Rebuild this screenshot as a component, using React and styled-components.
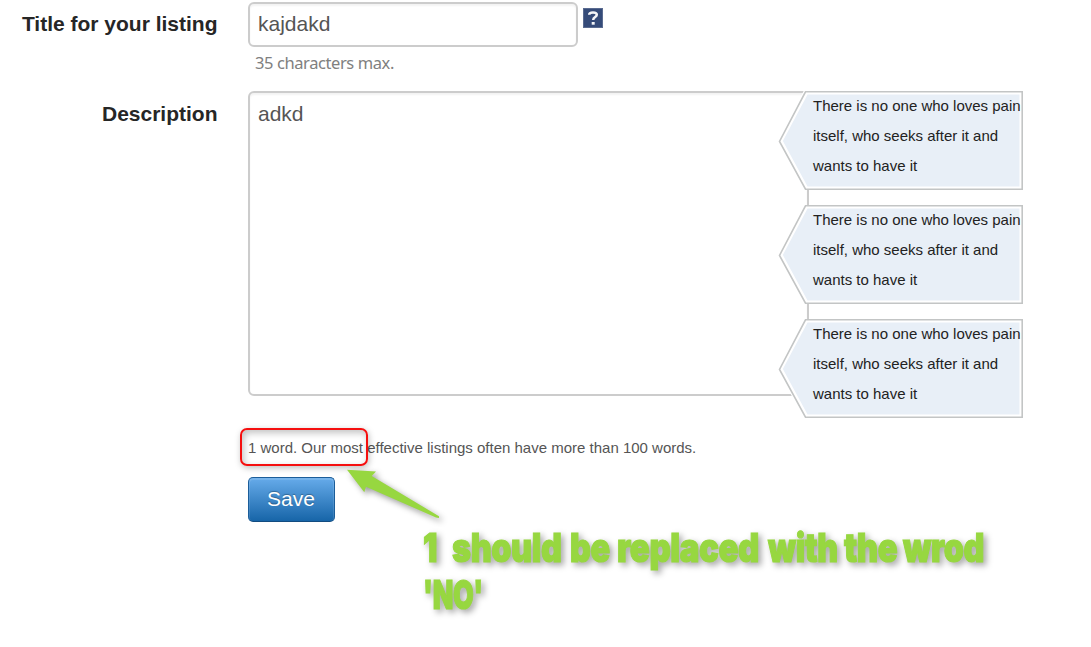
import React from 'react';
import styled, { createGlobalStyle } from 'styled-components';

const GlobalStyle = createGlobalStyle`
  * { box-sizing: border-box; }
  body {
    margin: 0;
    background: #fff;
    font-family: "Liberation Sans", Arial, sans-serif;
    overflow: hidden;
  }
`;

const Page = styled.main`
  position: relative;
  width: 1091px;
  height: 647px;
  padding-top: 2px;
  overflow: hidden;
`;

const FieldRow = styled.div`
  display: grid;
  grid-template-columns: 217.5px 1fr;
  column-gap: 30.5px;
  height: ${(p) => p.$height}px;
`;

const Label = styled.label`
  padding-top: ${(p) => p.$offset}px;
  text-align: right;
  font-size: 21px;
  font-weight: bold;
  line-height: 26px;
  color: #262626;
  white-space: nowrap;
`;

const Control = styled.div`
  position: relative;
`;

const InputLine = styled.div`
  display: flex;
  align-items: flex-start;
  gap: 5px;
`;

const fieldStyle = `
  display: block;
  margin: 0;
  border: 2px solid #ccc;
  border-radius: 6px;
  background: #fff;
  box-shadow: inset 0 2px 2px rgba(0, 0, 0, 0.05);
  font: 21px/26px "Liberation Sans", Arial, sans-serif;
  color: #555;
  outline: none;
`;

const TextInput = styled.input`
  ${fieldStyle}
  width: 330px;
  height: 45px;
  padding: 0 8px 2px;
`;

const TextArea = styled.textarea`
  ${fieldStyle}
  width: 561px;
  height: 305px;
  padding: 8px;
  resize: none;
`;

const HelpIcon = styled.svg`
  display: block;
  width: 20px;
  height: 20px;
  margin-top: 6px;
`;

const Hint = styled.p`
  margin: 4px 0 0 7px;
  font: 16.5px/24px "Noto Sans", Tahoma, sans-serif;
  letter-spacing: -0.41px;
  color: #808080;
`;

const CalloutList = styled.div`
  position: absolute;
  top: 0;
  left: 530px;
  display: flex;
  flex-direction: column;
  gap: 15px;
`;

const CalloutBox = styled.div`
  position: relative;
  width: 245px;
  height: 99px;
  padding-left: 35px;
  font-size: 15px;
  line-height: 30px;
  color: #222;
  white-space: nowrap;
`;

const CalloutShape = styled.svg`
  position: absolute;
  inset: 0;
`;

const CalloutText = styled.div`
  position: relative;
`;

const Footer = styled.div`
  padding-left: 248px;
`;

const WordCount = styled.p`
  margin: 0;
  padding-top: 42px;
  font-size: 15px;
  line-height: 20px;
  color: #555;
`;

const SaveButton = styled.button`
  display: block;
  margin-top: 19px;
  width: 87px;
  height: 45px;
  padding: 0 1px 1px 0;
  border: 1px solid #1b5d99;
  border-bottom-color: #124c80;
  border-radius: 5px;
  background: linear-gradient(#66abea, #1765a8);
  box-shadow: inset 0 1px 0 1px rgba(255, 255, 255, 0.12);
  font: 21px/26px "Liberation Sans", Arial, sans-serif;
  color: #fff;
  text-shadow: 0 -1px 1px rgba(0, 0, 0, 0.3);
`;

const Highlight = styled.div`
  position: absolute;
  left: 240px;
  top: 428px;
  width: 128px;
  height: 38px;
  border: 2px solid #f50f0f;
  border-radius: 7px;
  box-shadow: 1px 2px 6px rgba(0, 0, 0, 0.25), inset 2px 3px 7px rgba(0, 0, 0, 0.24);
`;

const Arrow = styled.svg`
  position: absolute;
  left: 335px;
  top: 458px;
  overflow: visible;
  filter: drop-shadow(3px 3px 3px rgba(0, 0, 0, 0.4));
`;

const Annotation = styled.div`
  position: absolute;
  left: 423px;
  top: 524px;
  font: 900 40px/47px Inter, sans-serif;
  letter-spacing: -0.5px;
  color: #97d740;
  -webkit-text-stroke: 1.2px #97d740;
  filter: drop-shadow(3px 3px 3px rgba(0, 0, 0, 0.35));
`;

const AnnotationLine = styled.div`
  display: flex;
  height: 47px;
`;

const Word = styled.span`
  display: block;
  flex: none;
  width: ${(p) => p.$width}px;
  white-space: nowrap;
  transform: scaleX(${(p) => p.$scale});
  transform-origin: left;
`;

const words = [
  ['1', 29, 0.8],
  ['should', 118, 0.81],
  ['be', 47, 0.81],
  ['replaced', 151, 0.825],
  ['with', 76, 0.8],
  ['the', 59, 0.82],
  ['wrod', 80, 0.81],
];

function Callout() {
  return (
    <CalloutBox>
      <CalloutShape width="245" height="99" viewBox="0 0 245 99">
        <path d="M28 1H244V98H28L2 50Z" fill="#e8eff7" stroke="#fff" strokeWidth="5" />
        <path d="M27.5 0.8H244.200V98.200H27.5L1.5 50.500Z" fill="none" stroke="#c3c5c5" strokeWidth="1.6" />
      </CalloutShape>
      <CalloutText>
        There is no one who loves pain<br />
        itself, who seeks after it and<br />
        wants to have it
      </CalloutText>
    </CalloutBox>
  );
}

export default function App() {
  return (
    <>
      <GlobalStyle />
      <Page>
        <FieldRow $height={89}>
          <Label htmlFor="title" $offset={9}>Title for your listing</Label>
          <Control>
            <InputLine>
              <TextInput id="title" defaultValue="kajdakd" />
              <HelpIcon viewBox="0 0 20 20">
                <rect x="0.5" y="0.5" width="19" height="19" fill="#354b79" stroke="#5a6b90" />
                <path d="M6.2 6.8C6.2 4.8 8 4.4 10 4.4C12.6 4.4 13.8 5.2 13.8 6.8C13.8 9.2 10.2 9 10.2 12" fill="none" stroke="#f4f5f8" strokeWidth="2.5" />
                <rect x="8.7" y="14" width="3" height="2.7" fill="#f4f5f8" />
              </HelpIcon>
            </InputLine>
            <Hint>35 characters max.</Hint>
          </Control>
        </FieldRow>
        <FieldRow $height={305}>
          <Label htmlFor="description" $offset={10}>Description</Label>
          <Control>
            <TextArea id="description" defaultValue="adkd" spellCheck={false} />
            <CalloutList>
              <Callout />
              <Callout />
              <Callout />
            </CalloutList>
          </Control>
        </FieldRow>
        <Footer>
          <WordCount>1 word. Our most effective listings often have more than 100 words.</WordCount>
          <SaveButton type="button">Save</SaveButton>
        </Footer>
        <Highlight />
        <Arrow width="110" height="65" viewBox="0 0 110 65">
          <path d="M12 11.700L41 13.500L36.700 18L104 58.300V60L101 59.500L31 28.700L29.300 34.300Z" fill="#97d740" />
        </Arrow>
        <Annotation>
          <AnnotationLine>
            {words.map(([text, width, scale]) => (
              <Word key={text} $width={width} $scale={scale}>{text}</Word>
            ))}
          </AnnotationLine>
          <AnnotationLine>
            <Word $width={58} $scale={0.67}>'NO'</Word>
          </AnnotationLine>
        </Annotation>
      </Page>
    </>
  );
}
